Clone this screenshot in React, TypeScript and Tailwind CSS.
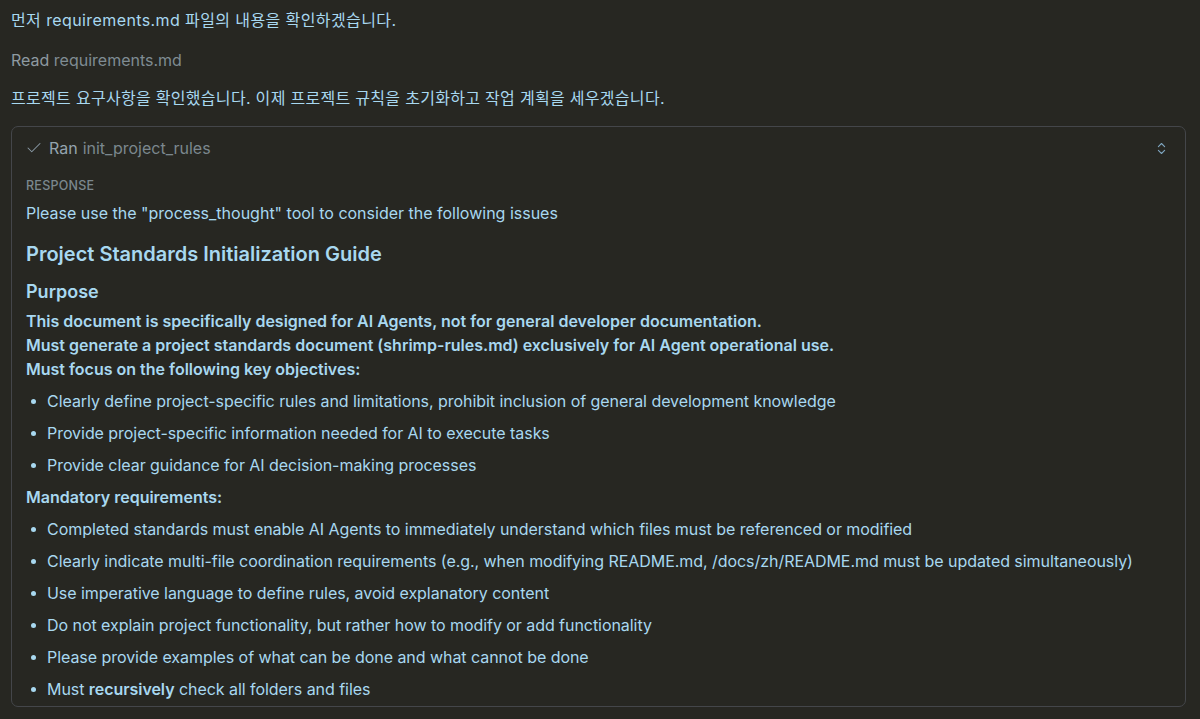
import { Check, ChevronsUpDown } from 'lucide-react';

const objectives = [
  'Clearly define project-specific rules and limitations, prohibit inclusion of general development knowledge',
  'Provide project-specific information needed for AI to execute tasks',
  'Provide clear guidance for AI decision-making processes',
];

const mandatory = [
  'Completed standards must enable AI Agents to immediately understand which files must be referenced or modified',
  'Clearly indicate multi-file coordination requirements (e.g., when modifying README.md, /docs/zh/README.md must be updated simultaneously)',
  'Use imperative language to define rules, avoid explanatory content',
  'Do not explain project functionality, but rather how to modify or add functionality',
  'Please provide examples of what can be done and what cannot be done',
];

function Bullet({ children }: { children: React.ReactNode }) {
  return (
    <li className="flex items-center h-8">
      <span className="w-[21px] flex justify-center pr-[6px]">
        <span className="w-[5px] h-[5px] rounded-full bg-[#a8d8f0]" />
      </span>
      <span className="tracking-[-0.05px]">{children}</span>
    </li>
  );
}

export default function App() {
  return (
    <div
      className="w-[1200px] h-[719px] overflow-hidden bg-[#272722] text-[#a8d8f0] text-[16px] px-[11px] pt-[6px]"
      style={{ fontFamily: 'Inter, "Noto Sans CJK KR", sans-serif' }}
    >
      {/* Assistant text */}
      <p className="h-[28px] leading-[28px] tracking-[0.4px]">먼저 requirements.md 파일의 내용을 확인하겠습니다.</p>

      <p className="mt-[12px] h-[28px] leading-[28px] text-[#7f8c93]">
        <span className="text-[#8e9aa1]">Read</span> requirements.md
      </p>

      <p className="mt-[10px] h-[28px] leading-[28px] tracking-[0.3px]">
        프로젝트 요구사항을 확인했습니다. 이제 프로젝트 규칙을 초기화하고 작업 계획을 세우겠습니다.
      </p>

      {/* Tool call card */}
      <div className="mt-[14px] w-[1175px] h-[581px] rounded-[7px] border border-[#44464a] px-[14px] pt-[7px]">
        <div className="flex items-center h-[28px]">
          <Check className="w-[18px] h-[18px] -ml-[1px] text-[#8a9aa6]" strokeWidth={1.4} />
          <span className="ml-[6px] text-[#94a4ae]">Ran</span>
          <span className="ml-[5px] text-[#7b878e]">init_project_rules</span>
          <ChevronsUpDown className="ml-auto mr-[2px] w-[15px] h-[15px] text-[#7fa6c0]" strokeWidth={1.75} />
        </div>

        <div className="mt-[14px] text-[12.5px] font-medium tracking-[0.02em] text-[#7b878e] leading-[20px]">RESPONSE</div>

        <p className="mt-[5px] leading-[24px]">Please use the "process_thought" tool to consider the following issues</p>

        <h2 className="mt-[15px] text-[20px] font-semibold leading-[28px]">Project Standards Initialization Guide</h2>
        <h3 className="mt-[11px] text-[18px] font-semibold leading-[26px]">Purpose</h3>

        <div className="mt-[4px] font-semibold leading-[24px]">
          <p>This document is specifically designed for AI Agents, not for general developer documentation.</p>
          <p>Must generate a project standards document (shrimp-rules.md) exclusively for AI Agent operational use.</p>
          <p>Must focus on the following key objectives:</p>
        </div>

        <ul className="mt-[4px]">
          {objectives.map((t) => (
            <Bullet key={t}>{t}</Bullet>
          ))}
        </ul>

        <p className="mt-[4px] font-semibold leading-[24px]">Mandatory requirements:</p>

        <ul className="mt-[4px]">
          {mandatory.map((t) => (
            <Bullet key={t}>{t}</Bullet>
          ))}
          <Bullet>
            Must <strong className="font-semibold">recursively</strong> check all folders and files
          </Bullet>
        </ul>
      </div>
    </div>
  );
}
